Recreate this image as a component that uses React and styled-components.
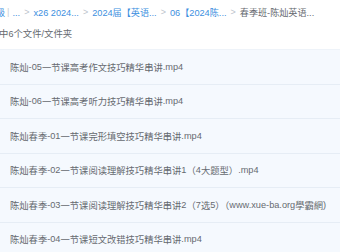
import React from "react";
import styled, { createGlobalStyle } from "styled-components";

const GlobalStyle = createGlobalStyle`
  html, body {
    margin: 0;
    padding: 0;
    background: #ffffff;
    overflow: hidden;
  }
  body {
    font-family: "Noto Sans CJK SC", "Liberation Sans", sans-serif;
  }
`;

const Page = styled.div`
  width: 340px;
  height: 252px;
  overflow: hidden;
`;

const Crumbs = styled.div`
  display: flex;
  align-items: center;
  height: 24px;
  margin-left: -4px;
  white-space: nowrap;
  font-size: 9.1px;
`;

const Crumb = styled.span`
  color: ${(p) => (p.$current ? "#666a70" : "#3d8fe0")};
`;

const Sep = styled.span`
  color: #bcc3cc;
  font-family: "Liberation Sans", sans-serif;
  font-size: 9px;
  margin: 0 4px;
`;

const Bar = styled.span`
  color: #c6ccd4;
  font-family: "Liberation Sans", sans-serif;
  margin: 0 3px 0 2px;
`;

// latin runs use a narrower face than the CJK glyphs, as in the original UI font
const Latin = styled.span`
  font-family: "Liberation Sans", sans-serif;
  font-size: ${(p) => p.$size || "9.2px"};
`;

const Count = styled.div`
  height: 21px;
  line-height: 19px;
  margin-left: -1px;
  font-size: 9.4px;
  color: #666a70;
`;

const List = styled.div`
  margin-top: 4px;
  border-top: 1px solid #eef3f9;
`;

const Row = styled.div`
  display: flex;
  align-items: center;
  height: 33.5px;
  padding-left: 10px;
  background: #f5f9fe;
  border-bottom: 1px solid #e6edf5;
  font-size: 9.3px;
  color: #666a70;
  white-space: nowrap;
`;

const files = [
  "陈灿-05一节课高考作文技巧精华串讲.mp4",
  "陈灿-06一节课高考听力技巧精华串讲.mp4",
  "陈灿春季-01一节课完形填空技巧精华串讲.mp4",
  "陈灿春季-02一节课阅读理解技巧精华串讲1（4大题型）.mp4",
  "陈灿春季-03 一节课阅读理解技巧精华串讲2（7选5）（www.xue-ba.org學霸網)",
  "陈灿春季-04一节课短文改错技巧精华串讲.mp4",
];

function Mixed({ text, size }) {
  const parts = text.split(/([\x20-\x7e]+)/).filter(Boolean);
  return (
    <>
      {parts.map((p, i) =>
        /^[\x20-\x7e]+$/.test(p) ? (
          <Latin key={i} $size={size}>
            {p}
          </Latin>
        ) : (
          <span key={i}>{p}</span>
        )
      )}
    </>
  );
}

export default function App() {
  return (
    <Page>
      <GlobalStyle />
      <Crumbs>
        <Crumb>级</Crumb>
        <Bar>|</Bar>
        <Crumb>
          <Latin $size="9.2px">...</Latin>
        </Crumb>
        <Sep>&gt;</Sep>
        <Crumb>
          <Latin $size="9.2px">x26 2024...</Latin>
        </Crumb>
        <Sep>&gt;</Sep>
        <Crumb>
          <Mixed text="2024届【英语..." size="9.2px" />
        </Crumb>
        <Sep>&gt;</Sep>
        <Crumb>
          <Mixed text="06【2024陈..." size="9.2px" />
        </Crumb>
        <Sep>&gt;</Sep>
        <Crumb $current>
          <Mixed text="春季班-陈灿英语..." size="9.2px" />
        </Crumb>
      </Crumbs>
      <Count>
        <Mixed text="中6个文件/文件夹" size="9px" />
      </Count>
      <List>
        {files.map((f) => (
          <Row key={f}>
            <Mixed text={f} />
          </Row>
        ))}
      </List>
    </Page>
  );
}
